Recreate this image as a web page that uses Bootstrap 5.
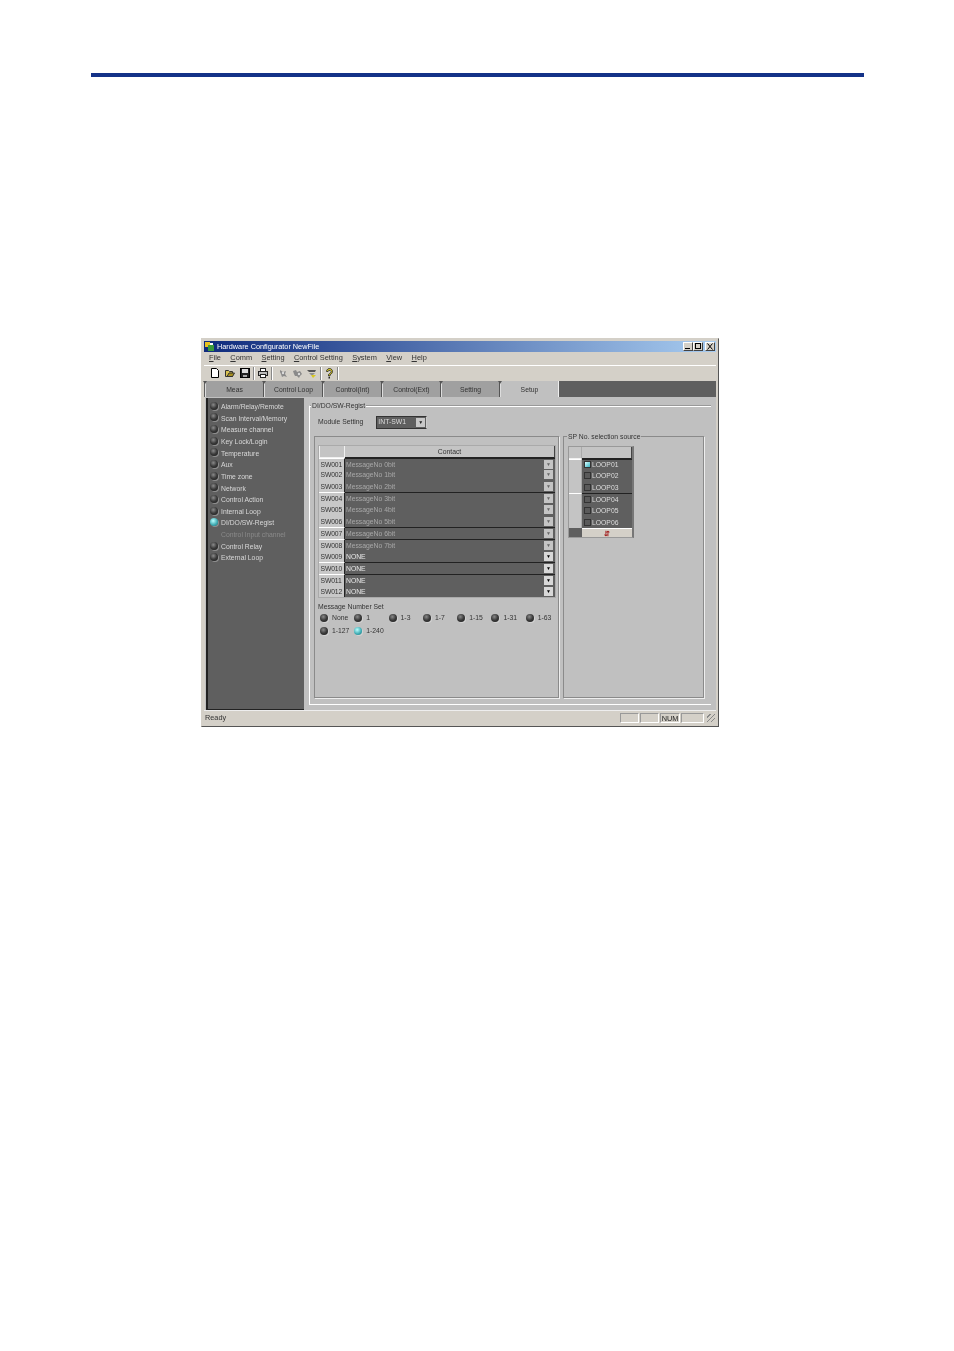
<!DOCTYPE html>
<html lang="en"><head><meta charset="utf-8"><title>Hardware Configurator</title>
<link rel="stylesheet" href="https://cdn.jsdelivr.net/npm/bootstrap@5.3.0/dist/css/bootstrap.min.css">
<style>
html,body{background:#fff;height:1351px;overflow:hidden}
body{font-family:"Liberation Sans",Arial,sans-serif;font-size:6.8px;line-height:1;color:#333}
.rule{height:4px;background:#143288;margin:73px 90px 0 91px}
.win{width:518px;height:389px;margin:261px 0 0 201px;background:#d4d0c8;border:1px solid #d4d0c8;border-right-color:#555;border-bottom-color:#555;padding:2px;filter:blur(.3px)}
.ttl{height:11px;background:linear-gradient(90deg,#0e2a7c,#a8ccf0);color:#fff;padding:0 1px 0 1px;font-size:7.3px;gap:3px}
.wb{width:10px;height:9px;background:#d4d0c8;border:1px solid;border-color:#fff #444 #444 #fff;color:#000}
.wbx{margin-left:2px}
.mnu{height:13px;padding-left:5px;gap:9.4px;font-size:7.4px;color:#333}
.mnu u{text-decoration-thickness:.5px}
.tbr{height:16px;margin-top:1px;padding-left:6px;border-top:1px solid #fff;gap:3px}
.tg{margin-right:2px}
.sep{width:2px;height:13px;background:#888;border-right:1px solid #fff}
.sepx{margin-right:1.5px}
.tstrip{height:16px;background:#5f5f5f;padding-left:1px}
.tb{width:59px;height:16px;padding-top:4px;background:#a0a0a0;color:#333;border-left:1px solid #ddd;border-right:1px solid #555;position:relative}
.tb::before{content:"";position:absolute;left:-3px;top:0;border:2px solid transparent;border-top:3px solid #555;border-bottom:0}
.tb.on{background:#c0c0c0;border-right:1px solid #eee}
.wbody{height:313px;background:#c0c0c0;border-left:1px solid #d4d0c8}
.side{width:98px;background:#5f5f5f;border-left:2px solid #222;border-bottom:1px solid #222;padding:4px 0 0 2px;color:#d8d8d8;margin:1px 5px 0 1px;height:312px;flex:none}
.srow{height:11.67px;gap:3px;white-space:nowrap}
.srow .led{margin-top:-3px}
.srow.off{color:#8a8a8a;padding-left:11px}
.led{width:8px;height:8px;border-radius:50%;flex:none;background:radial-gradient(circle at 42% 35%,#8a8a8a,#3a3a3a 50%,#1a1a1a);box-shadow:1px 1px 0 rgba(255,255,255,.3)}
.led.act{background:radial-gradient(circle at 40% 35%,#bff,#3aa8b0 60%,#2a7a80)}
.gmain{width:402px;margin-top:8px;border-top:1px solid #999;border-bottom:1px solid #fff;border-left:1px solid #fff;height:300px;position:relative;box-shadow:inset 0 1px 0 #fff}
.lgd{position:absolute;background:#c0c0c0;padding:0 1px;white-space:nowrap;color:#333}
.lg1{left:1px;top:-3px}
.lg2{left:3px;top:-3px}
.modrow{height:14px;margin-top:10px;padding-left:8px}
.combo{width:51px;height:13px;margin-left:13px;background:#5f5f5f;color:#ddd;border:1px solid #333;border-right:1px solid #ccc;padding-left:1px}
.cbtn{width:9px;height:9px;background:#c8c8c8;margin-right:1px;margin-left:auto;font-size:5px;text-align:center;color:#222;line-height:9px}
.boxes{margin:6px 0 0 4px;gap:4px}
.gbox{height:262px;border:1px solid #8a8a8a;box-shadow:1px 1px 0 #eee;position:relative}
.gc{width:245px;padding:8px 0 0 3px}
.gs{width:141px;padding:9px 0 0 4px}
.gtbl{width:238px;background:#c4c4c4;border:1px solid #aaa}
.gh{height:12px}
.gh>.c1,.rw>.c1{width:26px;flex:none;border-right:1px solid #222}
.gh>.c1{border-right-color:#f0f0f0;box-shadow:inset 1px 0 0 #f0f0f0;border-bottom:1px solid #f0f0f0}
.gh>.c2{flex:1;text-align:center;padding-top:3px;border-right:1px solid #444;border-bottom:1px solid #222}
.rw{height:11.67px;color:#ddd}
.rw>.c1{background:#c8c8c8;color:#333;padding-left:1.5px;line-height:11px;white-space:nowrap;letter-spacing:-.15px}
.rw>.c2{flex:1;background:#5f5f5f;padding-left:1px;line-height:11px;color:#a8a8a8}
.rw.en>.c2{color:#e8e8e8}
.rw.tl>.c2{border-top:1px solid #222}
.rw.tl>.c1{border-top:1px solid #fff}
.cbtn2{width:9px;height:9px;background:#c4c4c4;margin:1px 2px 0 auto;font-size:5px;text-align:center;line-height:9px;color:#666}
.rw.en .cbtn2{color:#000;background:#d8d8d8}
.msg{padding:4px 0 1px;margin-top:2px}
.radios{height:13px}
.rd{width:34.3px;gap:4px;padding-left:2px;white-space:nowrap;flex:none}
.rd .led{margin-top:-1px}
.stbl{width:66px;background:#c4c4c4;border:1px solid #999;border-right:2px solid #777}
.stbl .gh .c1,.stbl .rw .c1{width:13px;padding:0;background:#c4c4c4;border-right:1px solid #aaa;box-shadow:none}
.stbl .rw .c2{color:#ddd;padding:0 0 0 2px;display:flex;align-items:center;gap:1px}
.ck{width:7px;height:7px;border:1px solid #333;background:#5a5a5a;flex:none}
.ck.act{background:linear-gradient(135deg,#dff,#35b4c4)}
.sft{height:9px}
.sft .c1{width:13px;background:#5f5f5f}
.sft .c2{flex:1;background:#d4d0c8;text-align:center;color:#a01818;font-weight:700;line-height:9px;border-top:1px solid #fff}
.stat{height:15px;padding:1px 1px 0 1px;color:#333;border-top:1px solid #eee;font-size:7.3px}
.pane{height:10px;border:1px solid;border-color:#999 #fff #fff #999;margin-left:1px;text-align:center;color:#222;line-height:9px}
.p19{width:19px}.p20{width:20px}.p23{width:23px}
.grip{width:8px;height:8px;margin-left:3px;background:repeating-linear-gradient(135deg,transparent 0 2px,#888 2px 3px)}
</style></head><body>
<div class="rule"></div>
<div class="win d-flex flex-column">
 <div class="ttl d-flex align-items-center">
  <svg width="9" height="9" viewBox="0 0 9 9"><rect x="0" y="0" width="5" height="5" fill="#e8c020"/><rect x="3" y="3" width="6" height="6" fill="#3a9a3a"/><rect x="5" y="1" width="3" height="2" fill="#fff"/></svg>
  <span>Hardware Configurator NewFile</span>
  <div class="ms-auto d-flex">
   <div class="wb"><svg width="8" height="7" viewBox="0 0 8 7" class="d-block"><rect x="1" y="5" width="5" height="1" fill="#000"/></svg></div>
   <div class="wb"><svg width="8" height="7" viewBox="0 0 8 7" class="d-block"><rect x="1.500" y=".5" width="5" height="5" fill="none" stroke="#000"/></svg></div>
   <div class="wb wbx"><svg width="8" height="7" viewBox="0 0 8 7" class="d-block"><path d="M1.500 .5l5 6M6.500 .5l-5 6" stroke="#000"/></svg></div>
  </div>
 </div>
 <div class="mnu d-flex align-items-center">
  <span><u>F</u>ile</span><span><u>C</u>omm</span><span><u>S</u>etting</span><span><u>C</u>ontrol Setting</span><span><u>S</u>ystem</span><span><u>V</u>iew</span><span><u>H</u>elp</span>
 </div>
 <div class="tbr d-flex align-items-center">
  <svg class="tg" width="10" height="10" viewBox="0 0 10 10"><path d="M1.500 .5h5l2 2v7h-7z" fill="#fff" stroke="#000"/></svg>
  <svg class="tg" width="10" height="10" viewBox="0 0 10 10"><path d="M.5 8.500v-6h3l1 1h3v5z" fill="#d8c050" stroke="#333"/><path d="M2 8.500l2-3.500h5.500l-2 3.500z" fill="#a89020" stroke="#333"/></svg>
  <svg width="10" height="10" viewBox="0 0 10 10"><rect x=".5" y=".5" width="9" height="9" fill="#222" stroke="#000"/><rect x="2" y="1" width="6" height="4" fill="#ddd"/><rect x="3" y="7" width="4" height="2" fill="#aaa"/></svg>
  <div class="sep"></div>
  <svg width="10" height="10" viewBox="0 0 10 10"><rect x="2.500" y=".5" width="5" height="3" fill="#fff" stroke="#222"/><rect x=".5" y="3.500" width="9" height="4" fill="#bbb" stroke="#222"/><rect x="2.500" y="6.500" width="5" height="3" fill="#fff" stroke="#222"/></svg>
  <div class="sep sepx"></div>
  <svg width="11" height="11" viewBox="0 0 11 11"><path d="M2 2l3 2 3-1-1 3 2 3-3-1-2 1-1-3-1-2z" fill="#8a8a8a"/><circle cx="5" cy="5" r="1.200" fill="#dcdcdc"/></svg>
  <svg width="11" height="11" viewBox="0 0 11 11"><path d="M1 3l3-1 1 2 3-1 2 3-2 2-1 2-2-2-2 0-1-2z" fill="#8a8a8a"/><circle cx="7" cy="6" r="1.200" fill="#dcdcdc"/></svg>
  <svg width="11" height="11" viewBox="0 0 11 11"><path d="M1 2h9l-1 2H3z" fill="#555"/><path d="M3 5h6l-2 2H5z" fill="#8f8f8f"/><path d="M5 7h5l-3 3z" fill="#d8c820"/></svg>
  <div class="sep"></div>
  <svg width="9" height="11" viewBox="0 0 9 11"><path d="M1.500 3.500a3 3 0 1 1 4.800 2.400L5 7v1H3.500V6.500l2-1.500a1.500 1.500 0 1 0-2.400-1.500z" fill="#e8d820" stroke="#222" stroke-width=".8"/><rect x="3.500" y="9" width="1.500" height="1.500" fill="#222"/></svg>
  <div class="sep"></div>
 </div>
 <div class="tstrip d-flex">
  <div class="tb d-flex align-items-center justify-content-center">Meas</div>
  <div class="tb d-flex align-items-center justify-content-center">Control Loop</div>
  <div class="tb d-flex align-items-center justify-content-center">Control(Int)</div>
  <div class="tb d-flex align-items-center justify-content-center">Control(Ext)</div>
  <div class="tb d-flex align-items-center justify-content-center">Setting</div>
  <div class="tb on d-flex align-items-center justify-content-center">Setup</div>
 </div>
 <div class="wbody d-flex">
  <div class="side">
   <div class="srow d-flex align-items-center"><i class="led"></i>Alarm/Relay/Remote</div>
   <div class="srow d-flex align-items-center"><i class="led"></i>Scan Interval/Memory</div>
   <div class="srow d-flex align-items-center"><i class="led"></i>Measure channel</div>
   <div class="srow d-flex align-items-center"><i class="led"></i>Key Lock/Login</div>
   <div class="srow d-flex align-items-center"><i class="led"></i>Temperature</div>
   <div class="srow d-flex align-items-center"><i class="led"></i>Aux</div>
   <div class="srow d-flex align-items-center"><i class="led"></i>Time zone</div>
   <div class="srow d-flex align-items-center"><i class="led"></i>Network</div>
   <div class="srow d-flex align-items-center"><i class="led"></i>Control Action</div>
   <div class="srow d-flex align-items-center"><i class="led"></i>Internal Loop</div>
   <div class="srow d-flex align-items-center"><i class="led act"></i>DI/DO/SW-Regist</div>
   <div class="srow off d-flex align-items-center">Control Input channel</div>
   <div class="srow d-flex align-items-center"><i class="led"></i>Control Relay</div>
   <div class="srow d-flex align-items-center"><i class="led"></i>External Loop</div>
  </div>
  <div class="gmain">
   <span class="lgd lg1">DI/DO/SW-Regist</span>
   <div class="modrow d-flex align-items-center">Module Setting
    <div class="combo d-flex align-items-center">INT-SW1<span class="cbtn">▼</span></div>
   </div>
   <div class="boxes d-flex">
    <div class="gbox gc">
     <div class="gtbl">
      <div class="gh d-flex"><div class="c1"></div><div class="c2">Contact</div></div>
      <div class="rw tl d-flex"><div class="c1">SW001</div><div class="c2 d-flex">MessageNo 0bit<span class="cbtn2">▼</span></div></div>
      <div class="rw d-flex"><div class="c1">SW002</div><div class="c2 d-flex">MessageNo 1bit<span class="cbtn2">▼</span></div></div>
      <div class="rw d-flex"><div class="c1">SW003</div><div class="c2 d-flex">MessageNo 2bit<span class="cbtn2">▼</span></div></div>
      <div class="rw tl d-flex"><div class="c1">SW004</div><div class="c2 d-flex">MessageNo 3bit<span class="cbtn2">▼</span></div></div>
      <div class="rw d-flex"><div class="c1">SW005</div><div class="c2 d-flex">MessageNo 4bit<span class="cbtn2">▼</span></div></div>
      <div class="rw d-flex"><div class="c1">SW006</div><div class="c2 d-flex">MessageNo 5bit<span class="cbtn2">▼</span></div></div>
      <div class="rw tl d-flex"><div class="c1">SW007</div><div class="c2 d-flex">MessageNo 6bit<span class="cbtn2">▼</span></div></div>
      <div class="rw tl d-flex"><div class="c1">SW008</div><div class="c2 d-flex">MessageNo 7bit<span class="cbtn2">▼</span></div></div>
      <div class="rw en d-flex"><div class="c1">SW009</div><div class="c2 d-flex">NONE<span class="cbtn2">▼</span></div></div>
      <div class="rw en tl d-flex"><div class="c1">SW010</div><div class="c2 d-flex">NONE<span class="cbtn2">▼</span></div></div>
      <div class="rw en tl d-flex"><div class="c1">SW011</div><div class="c2 d-flex">NONE<span class="cbtn2">▼</span></div></div>
      <div class="rw en d-flex"><div class="c1">SW012</div><div class="c2 d-flex">NONE<span class="cbtn2">▼</span></div></div>
     </div>
     <div class="msg">Message Number Set</div>
     <div class="radios d-flex align-items-center">
      <div class="rd d-flex align-items-center"><i class="led"></i>None</div>
      <div class="rd d-flex align-items-center"><i class="led"></i>1</div>
      <div class="rd d-flex align-items-center"><i class="led"></i>1-3</div>
      <div class="rd d-flex align-items-center"><i class="led"></i>1-7</div>
      <div class="rd d-flex align-items-center"><i class="led"></i>1-15</div>
      <div class="rd d-flex align-items-center"><i class="led"></i>1-31</div>
      <div class="rd d-flex align-items-center"><i class="led"></i>1-63</div>
     </div>
     <div class="radios d-flex align-items-center">
      <div class="rd d-flex align-items-center"><i class="led"></i>1-127</div>
      <div class="rd d-flex align-items-center"><i class="led act"></i>1-240</div>
     </div>
    </div>
    <div class="gbox gs">
     <span class="lgd lg2">SP No. selection source</span>
     <div class="stbl">
      <div class="gh d-flex"><div class="c1"></div><div class="c2"></div></div>
      <div class="rw tl d-flex"><div class="c1"></div><div class="c2"><i class="ck act"></i>LOOP01</div></div>
      <div class="rw d-flex"><div class="c1"></div><div class="c2"><i class="ck"></i>LOOP02</div></div>
      <div class="rw d-flex"><div class="c1"></div><div class="c2"><i class="ck"></i>LOOP03</div></div>
      <div class="rw tl d-flex"><div class="c1"></div><div class="c2"><i class="ck"></i>LOOP04</div></div>
      <div class="rw d-flex"><div class="c1"></div><div class="c2"><i class="ck"></i>LOOP05</div></div>
      <div class="rw d-flex"><div class="c1"></div><div class="c2"><i class="ck"></i>LOOP06</div></div>
      <div class="sft d-flex"><div class="c1"></div><div class="c2">⇵</div></div>
     </div>
    </div>
   </div>
  </div>
 </div>
 <div class="stat d-flex align-items-center">Ready
  <div class="ms-auto d-flex align-items-center">
   <div class="pane p19"></div><div class="pane p19"></div><div class="pane p20">NUM</div><div class="pane p23"></div><div class="grip"></div>
  </div>
 </div>
</div>
<script src="https://cdn.jsdelivr.net/npm/bootstrap@5.3.0/dist/js/bootstrap.bundle.min.js"></script>
</body></html>
